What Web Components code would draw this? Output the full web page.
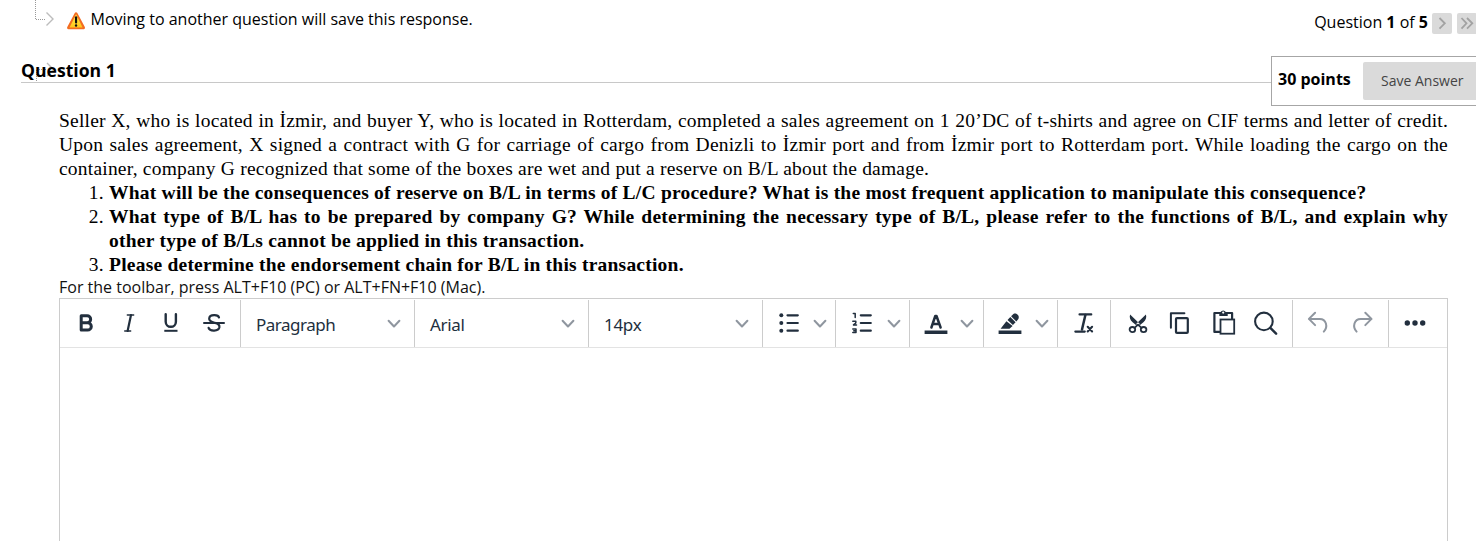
<!DOCTYPE html>
<html lang="en"><head><meta charset="utf-8"><title>Question 1</title>
<style>html,body{margin:0;height:541px;overflow:hidden;background:#fff}</style></head><body>
<exam-page></exam-page>
<script>
const define=(name,html,after)=>customElements.define(name,class extends HTMLElement{
  constructor(){super();this.attachShadow({mode:'open'}).innerHTML=html;}
  connectedCallback(){if(after)after(this,this.shadowRoot);}
});

const ink='fill="none" stroke="#222f3e" stroke-linecap="round" stroke-linejoin="round"';
const icons={
bold:`<path ${ink} stroke-width="3" stroke-linejoin="miter" d="M7.200 4.800H13.200a3.400 3.400 0 0 1 0 6.900H7.200zM7.200 11.700h6.400a3.700 3.700 0 0 1 0 7.400H7.200z"/>`,
italic:`<path ${ink} stroke-width="1.4" d="M10.3 4h6.4M7.7 20h6"/><path ${ink} stroke-width="2.2" stroke-linecap="butt" d="M14 4 10.6 20"/>`,
underline:`<path ${ink} stroke-width="2.4" stroke-linecap="butt" d="M6.7 3.3v7.400a5.100 5.100 0 0 0 10.200 0V3.300"/><path fill="#222f3e" d="M5.300 18.800h13.200v2H5.300z"/>`,
strike:`<path ${ink} stroke-width="2.2" d="M17 6.5C16.2 3.3 7.8 3.2 7.2 7.3c-.4 3.2 4 4 6 4.6 3 .8 4.6 2 4.2 4.4-.8 4.2-9.600 4.300-10.800.6"/><path ${ink} stroke-width="2" stroke-linecap="butt" d="M2 12h20"/>`,
chev:`<path fill="none" stroke="#8f969f" stroke-width="2" stroke-linecap="round" stroke-linejoin="round" d="m6.600 9.700 5.400 5.800 5.400-5.800"/>`,
ul:`<g fill="#222f3e"><circle cx="4.300" cy="4.300" r="2"/><circle cx="4.300" cy="12" r="2"/><circle cx="4.300" cy="19.700" r="2"/></g><path ${ink} stroke-width="2.2" d="M10.500 4.300h10.300M10.500 12h10.300M10.500 19.700h10.300"/>`,
ol:`<path ${ink} stroke-width="1.500" stroke-linecap="butt" stroke-linejoin="miter" d="M3.300 2.600h1.900v4M2.800 10.300h3v1.700l-2.300 1.900h3M2.800 17.900h3.200v3.700H2.800M3.800 19.700h2.200"/><path ${ink} stroke-width="2.2" d="M10.800 4.300h10M10.800 12h10M10.800 19.700h10"/>`,
color:`<path ${ink} stroke-width="2.500" stroke-linecap="butt" d="M7.400 16.500 11.300 5h1.200l4.100 11.500M8.700 12.900h6.500"/><path fill="#222f3e" d="M.6 19.500h22.800v3.500H.6z"/>`,
pen:`<path fill="#222f3e" d="M.6 19.500h22.800v3.500H.6zM2.600 17.700l5.800-7.500 6.200 4.800-3.100 2.700zM9.500 9.100l2.800-3 5.300 5.200-2.700 2.700z"/><path fill="#222f3e" d="m13.100 5.200 2.300-2.100c2.800-1.800 6.600 1.500 5 4.800l-2.100 2.500z"/>`,
clear:`<path ${ink} stroke-width="2.100" d="M7.500 3.400h11.800M3.300 20.600h9.500"/><path ${ink} stroke-width="2.500" d="M13.400 4 10 18.500"/><path ${ink} stroke-width="2.100" d="m15.700 15.800 4.400 4.600M20.100 15.800l-4.400 4.600"/>`,
cut:`<g ${ink} stroke-width="1.800"><ellipse cx="6.400" cy="18.600" rx="2.800" ry="2.600"/><ellipse cx="17.600" cy="18.600" rx="2.800" ry="2.600"/><path d="m8.500 16.800 3.500-3.200 3.500 3.200"/></g><path fill="#222f3e" d="M4.100 3.400 13.900 13l-2.400 2.300-4.900-4.100C4 8.900 3.200 6.300 4.100 3.400zM19.900 3.400 10.100 13l2.400 2.300 4.900-4.100c2.600-2.300 3.400-4.900 2.500-7.800z"/>`,
copy:`<path ${ink} stroke-width="2" stroke-linecap="butt" d="M2.900 16.800V2.300h13.500"/><rect ${ink} stroke-width="2.200" x="8" y="7.100" width="11.800" height="14.800" rx="1"/>`,
paste:`<path ${ink} stroke-width="2.200" d="M7.500 20.900H2.400V2H20.100v6"/><path fill="#222f3e" d="M7.300 1h1.300a2.900 2.900 0 0 1 5.200 0h1.900v4H7.300z"/><circle fill="#fff" cx="11.200" cy="1.600" r="1.100"/><rect fill="#fff" stroke="#222f3e" stroke-width="1.800" x="8.500" y="8.500" width="13.700" height="14.200"/>`,
search:`<circle ${ink} stroke-width="2.100" cx="9.900" cy="10.400" r="8.800"/><path ${ink} stroke-width="2.400" d="m16.300 16.900 5.800 5.800"/>`,
undo:`<path fill="none" stroke="#8f969f" stroke-width="2" stroke-linecap="round" stroke-linejoin="round" d="M9.100 1.700 2.900 7.900l6.200 6.200M2.900 7.900h10.800c6.600 0 8.600 7.800 4.100 12.700"/>`,
redo:`<path fill="none" stroke="#8f969f" stroke-width="2" stroke-linecap="round" stroke-linejoin="round" d="m15.300 1.700 6.200 6.200-6.200 6.200M21.500 7.900H10.700C4.100 7.900 2.100 15.700 6.600 20.600"/>`,
more:`<g fill="#222f3e"><circle cx="4.300" cy="12" r="2.700"/><circle cx="12" cy="12" r="2.700"/><circle cx="19.700" cy="12" r="2.700"/></g>`
};
define('tool-icon','<style>:host{display:block;flex:none;width:24px;height:24px}svg{display:block;overflow:visible}</style><svg width="24" height="24" viewBox="0 0 24 24"></svg>',
 (h,r)=>{r.querySelector('svg').innerHTML=icons[h.getAttribute('name')];h.style.marginLeft=(h.getAttribute('lead')||0)+'px';});

define('tool-group','<style>:host{display:flex;box-sizing:border-box;flex:none;height:47px;padding-top:11px;align-items:flex-start;border-right:1px solid #ccc}:host([last]){border-right:0}</style><slot></slot>',
 h=>{h.style.width=h.getAttribute('w')+'px';});

define('tool-select',`<style>:host{display:flex;box-sizing:border-box;flex:none;width:174px;height:47px;align-items:flex-start;justify-content:space-between;border-right:1px solid #ccc;padding:11px 8px 0 15px;font:17px/24px "Noto Sans",sans-serif;color:#222f3e}span{padding-top:2px;letter-spacing:var(--track,0)}</style><span><slot></slot></span><tool-icon name="chev"></tool-icon>`);

define('editor-box',`<style>:host{display:block;box-sizing:border-box;width:1389px;height:260px;border:1px solid #ccc}nav{display:flex;padding-top:1px;height:47px;border-bottom:1px solid #e3e3e3}</style>
<nav>
<tool-group w="181"><tool-icon name="bold" lead="14"></tool-icon><tool-icon name="italic" lead="19"></tool-icon><tool-icon name="underline" lead="18"></tool-icon><tool-icon name="strike" lead="19"></tool-icon></tool-group>
<tool-select style="--track:-.5px">Paragraph</tool-select><tool-select style="--track:-.3px">Arial</tool-select><tool-select style="--track:-.3px">14px</tool-select>
<tool-group w="73"><tool-icon name="ul" lead="14"></tool-icon><tool-icon name="chev" lead="7"></tool-icon></tool-group>
<tool-group w="74"><tool-icon name="ol" lead="14"></tool-icon><tool-icon name="chev" lead="8"></tool-icon></tool-group>
<tool-group w="74"><tool-icon name="color" lead="14"></tool-icon><tool-icon name="chev" lead="7"></tool-icon></tool-group>
<tool-group w="74"><tool-icon name="pen" lead="14"></tool-icon><tool-icon name="chev" lead="8"></tool-icon></tool-group>
<tool-group w="53"><tool-icon name="clear" lead="14"></tool-icon></tool-group>
<tool-group w="182"><tool-icon name="cut" lead="15"></tool-icon><tool-icon name="copy" lead="18"></tool-icon><tool-icon name="paste" lead="20"></tool-icon><tool-icon name="search" lead="18"></tool-icon></tool-group>
<tool-group w="96"><tool-icon name="undo" lead="13"></tool-icon><tool-icon name="redo" lead="20"></tool-icon></tool-group>
<tool-group w="58" last><tool-icon name="more" lead="14"></tool-icon></tool-group>
</nav>`);

define('page-button',`<style>:host{display:block;width:20px;height:21px;border-radius:2px;background:#dadada}svg{display:block}</style><svg width="20" height="21" fill="none" stroke="#a2a2a2" stroke-width="1.800"></svg>`,
 (h,r)=>{r.querySelector('svg').innerHTML=h.hasAttribute('end')?'<path d="m4.500 5 5 5.300-5 5.300M10 5l5.300 5.300-5.300 5.300"/>':'<path d="m7.500 5 5.300 5.300-5.300 5.300"/>';});

define('save-notice',`<style>:host{display:flex;height:56px;box-sizing:border-box;padding:8px 0 0 67px;font:16px/22px "Open Sans",sans-serif;color:#000}svg{flex:none;margin:3px 5px 0 0}span{white-space:nowrap}</style>
<svg width="18.5" height="20" viewBox="0 0 19 20" preserveAspectRatio="none"><defs><linearGradient id="g" x2="0" y2="1"><stop stop-color="#fff04a"/><stop offset="1" stop-color="#ffc51c"/></linearGradient></defs><path d="M9.300 2.700 17 16.800H1.600z" fill="url(#g)" stroke="#f36c21" stroke-width="3" stroke-linejoin="round"/><path d="M9.300 3.200 16 16.400H2.600z" fill="url(#g)"/><path d="M9.300 6.300v5.200" stroke="#111" stroke-width="2.200" stroke-linecap="round"/><circle cx="9.300" cy="14.500" r="1.200" fill="#111"/></svg><span><slot></slot></span>`);

define('question-pager',`<style>:host{display:flex;align-items:flex-start;padding-top:13px;font:16px/18px "Open Sans",sans-serif;color:#000}span{white-space:nowrap;margin-right:4px}page-button+page-button{margin-left:5px}</style><span>Question <b>1</b> of <b>5</b></span><page-button></page-button><page-button end></page-button>`);

define('question-heading',`<style>:host{display:flex;height:50px;font-family:"Open Sans",sans-serif;color:#000}
h3{box-sizing:border-box;flex:none;margin:0 0 0 21px;width:1250px;height:27px;border-bottom:1px solid #c8c8c8;font-size:17.6px;line-height:28px}
div{box-sizing:border-box;flex:none;width:220px;height:50px;border:1px solid #a6a6a6;display:flex;padding:5px 0 0 6px}
b{flex:none;width:85px;font-size:16px;line-height:34px;white-space:nowrap}button{flex:none;font:14px/38px "Open Sans",sans-serif;height:38px;width:130px;padding:0 0 0 18px;text-align:left;border:0;border-radius:2px;background:#dadada;color:#444}</style><h3>Question 1</h3><div><b>30 points</b><button>Save Answer</button></div>`);

define('question-text',`<style>:host{display:block;box-sizing:border-box;width:1389px;padding-top:3px;font:19.5px/24px "Liberation Serif",serif;letter-spacing:.21px;color:#000}
p,ol{margin:0;text-align:justify}ol{padding-left:50px}li b{font-weight:700;letter-spacing:.225px}</style>
<p>Seller X, who is located in İzmir, and buyer Y, who is located in Rotterdam, completed a sales agreement on 1 20’DC of t-shirts and agree on CIF terms and letter of credit. Upon sales agreement, X signed a contract with G for carriage of cargo from Denizli to İzmir port and from İzmir port to Rotterdam port. While loading the cargo on the container, company G recognized that some of the boxes are wet and put a reserve on B/L about the damage.</p>
<ol><li><b>What will be the consequences of reserve on B/L in terms of L/C procedure? What is the most frequent application to manipulate this consequence?</b></li><li><b>What type of B/L has to be prepared by company G? While determining the necessary type of B/L, please refer to the functions of B/L, and explain why other&nbsp;type of B/Ls cannot be applied in this transaction.</b></li><li><b>Please determine the endorsement chain for B/L in this transaction.</b></li></ol>`);

define('drop-trail',`<style>:host{position:absolute;left:34px;top:0}svg{display:block}</style><svg width="22" height="84" fill="none"><path d="M1.500 0v19M2 19.500h10M3 69.500h9M2.500 70v13" stroke="#999" stroke-dasharray="1 1"/><path d="m12.500 12.500 6.500 6.500-6.500 6.500M13 63l6.500 6.500-6.500 6.500" stroke="#bcbcbc" stroke-width="1.400"/></svg>`);

define('exam-page',`<style>:host{display:block;position:relative;width:1476px;height:541px;overflow:hidden;background:#fff}
header{display:flex;justify-content:space-between;width:1477px;height:56px}
question-heading{position:relative}main{padding-left:59px}.hint{margin:0;height:21px;font:16px/20px "Open Sans",sans-serif;color:#111;white-space:nowrap}</style>
<drop-trail></drop-trail>
<header><save-notice>Moving to another question will save this response.</save-notice><question-pager></question-pager></header>
<question-heading></question-heading>
<main><question-text></question-text><p class="hint">For the toolbar, press ALT+F10 (PC) or ALT+FN+F10 (Mac).</p><editor-box></editor-box></main>`);
</script></body></html>
